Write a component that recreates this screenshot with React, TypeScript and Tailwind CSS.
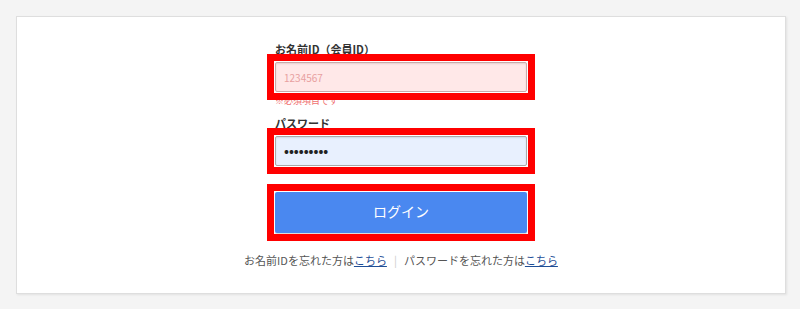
import React from 'react';

const font = { fontFamily: '"Noto Sans CJK JP", "Noto Sans", sans-serif' };

const Mark: React.FC<{ children: React.ReactNode }> = ({ children }) => (
  <div className="relative">
    {children}
    <div className="pointer-events-none absolute -inset-[8px] border-[7px] border-[#ff0000]" />
  </div>
);

const App: React.FC = () => {
  return (
    <div className="h-[309px] w-[800px] bg-[#f4f4f4] p-4" style={font}>
      <div className="flex h-[278px] w-[770px] flex-col items-center border border-[#dedede] bg-white pt-[25px] shadow-[1px_1px_2px_rgba(0,0,0,0.08)]">
        <div className="flex w-[252px] flex-col">
          <label className="text-[11px] font-bold leading-[14px] text-[#333]">お名前ID（会員ID）</label>
          <div className="mt-[6px]">
            <Mark>
              <div className="flex h-[30px] items-center rounded-[2px] border border-[#c9a9a9] bg-[#ffe8e8] px-2 text-[10px] text-[#e8a0a0] shadow-[inset_0_1px_2px_rgba(0,0,0,0.1)]">
                1234567
              </div>
            </Mark>
          </div>
          <p className="mt-[4px] text-[9px] leading-[10px] text-[#f07070]">※必須項目です</p>
          <label className="mt-[10px] text-[11px] font-bold leading-[14px] text-[#333]">パスワード</label>
          <div className="mt-[6px]">
            <Mark>
              <div className="flex h-[30px] items-center rounded-[2px] border border-[#a9a9a9] bg-[#e8f0fe] px-2 text-[13px] font-bold text-[#222] shadow-[inset_0_1px_2px_rgba(0,0,0,0.1)]">
                •••••••••
              </div>
            </Mark>
          </div>
          <div className="mt-[26px]">
            <Mark>
              <button className="flex h-[41px] w-full items-center justify-center rounded-[2px] bg-[#4a88f0] pb-[2px] text-[14px] text-white shadow-[0_1px_1px_rgba(0,0,0,0.15)]">
                ログイン
              </button>
            </Mark>
          </div>
        </div>
        <div className="mt-[20px] flex items-center text-[11px] leading-[14px] text-[#555]">
          <span>
            お名前IDを忘れた方は<a className="text-[#1f4e96] underline">こちら</a>
          </span>
          <span className="mx-[7px] text-[#ccc]">|</span>
          <span>
            パスワードを忘れた方は<a className="text-[#1f4e96] underline">こちら</a>
          </span>
        </div>
      </div>
    </div>
  );
};

export default App;
